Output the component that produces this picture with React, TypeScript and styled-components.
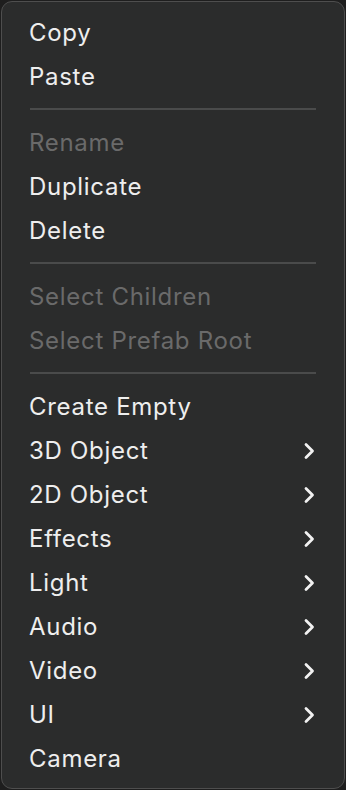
import React from "react";
import styled, { createGlobalStyle } from "styled-components";

const Global = createGlobalStyle`
  html, body { margin: 0; padding: 0; background: #1e1e1e; }
  body { font-family: Inter, "Noto Sans", sans-serif; -webkit-font-smoothing: antialiased; }
`;

const Screen = styled.div`
  padding: 1px;
  width: 346px;
  height: 790px;
  box-sizing: border-box;
  background: #1e1e1e;
`;

const Menu = styled.div`
  box-sizing: border-box;
  width: 344px;
  height: 788px;
  border: 1px solid #4e4e4e;
  border-radius: 11px;
  background: #2b2c2c;
  padding: 9px 0 0 0;
  display: flex;
  flex-direction: column;
`;

const Row = styled.div<{ $disabled?: boolean }>`
  height: 44px;
  display: flex;
  align-items: center;
  justify-content: space-between;
  padding: 0 29px 0 27px;
  font-size: 24px;
  font-weight: 400;
  letter-spacing: 0.7px;
  color: ${(p) => (p.$disabled ? "#6a6a6a" : "#eeeeee")};
`;

const Label = styled.span`
  line-height: 1;
`;

const Separator = styled.div`
  height: 22px;
  display: flex;
  align-items: flex-start;
  padding: 9px 28px 0 28px;
  box-sizing: border-box;
  &::after {
    content: "";
    flex: 1;
    height: 2px;
    background: #4a4b4b;
  }
`;

const Chevron = () => (
  <svg width="12" height="18" viewBox="0 0 12 18" fill="none">
    <path d="M3 2.5 L9.5 9 L3 15.5" stroke="#f2f2f2" strokeWidth="2.8" strokeLinecap="round" strokeLinejoin="round" />
  </svg>
);

type Item = { label: string; disabled?: boolean; sub?: boolean } | "sep";

const items: Item[] = [
  { label: "Copy" },
  { label: "Paste" },
  "sep",
  { label: "Rename", disabled: true },
  { label: "Duplicate" },
  { label: "Delete" },
  "sep",
  { label: "Select Children", disabled: true },
  { label: "Select Prefab Root", disabled: true },
  "sep",
  { label: "Create Empty" },
  { label: "3D Object", sub: true },
  { label: "2D Object", sub: true },
  { label: "Effects", sub: true },
  { label: "Light", sub: true },
  { label: "Audio", sub: true },
  { label: "Video", sub: true },
  { label: "UI", sub: true },
  { label: "Camera" },
];

export default function App() {
  return (
    <Screen>
      <Global />
      <Menu>
        {items.map((it, i) =>
          it === "sep" ? (
            <Separator key={i} />
          ) : (
            <Row key={i} $disabled={it.disabled}>
              <Label>{it.label}</Label>
              {it.sub && <Chevron />}
            </Row>
          )
        )}
      </Menu>
    </Screen>
  );
}
